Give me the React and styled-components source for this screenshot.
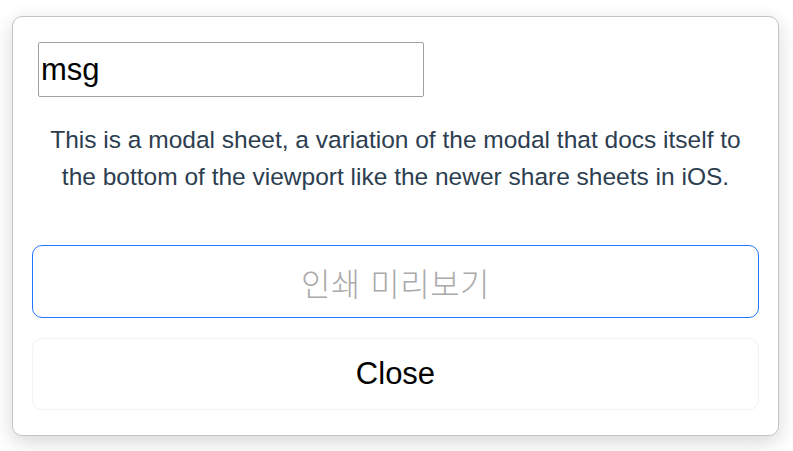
import React from "react";
import styled, { createGlobalStyle } from "styled-components";

const GlobalStyle = createGlobalStyle`
  html, body {
    margin: 0;
    padding: 0;
    background: #ffffff;
    font-family: "Liberation Sans", Arial, sans-serif;
  }
`;

function App() {
  return (
    <Page>
      <GlobalStyle />
      <Sheet>
        <MsgInput defaultValue="msg" />
        <Description>
          This is a modal sheet, a variation of the modal that docs itself to
          the bottom of the viewport like the newer share sheets in iOS.
        </Description>
        <Actions>
          <SheetButton primary>인쇄 미리보기</SheetButton>
          <SheetButton>Close</SheetButton>
        </Actions>
      </Sheet>
    </Page>
  );
}

export default App;

const Page = styled.div`
  padding: 16px 14px 16px 12px;
`;

const Sheet = styled.div`
  display: flex;
  flex-direction: column;
  background: #fff;
  border: 1px solid #c4c4c4;
  border-radius: 10px;
  box-shadow: 0 6px 20px rgba(0, 0, 0, 0.16);
  padding: 25px 19px 25px 19px;
`;

const MsgInput = styled.input`
  align-self: flex-start;
  box-sizing: border-box;
  width: 386px;
  height: 55px;
  margin-left: 6px;
  padding: 0 2px;
  border: 1px solid #a0a0a0;
  border-radius: 2px;
  font-family: "Liberation Sans", Arial, sans-serif;
  font-size: 31px;
  color: #000;
  outline: none;
`;

const Description = styled.p`
  margin: 24px 0 50px;
  padding: 0 12px;
  text-align: center;
  font-size: 24.5px;
  line-height: 37px;
  color: #2c3e50;
`;

const Actions = styled.div`
  display: flex;
  flex-direction: column;
  gap: 20px;
`;

const SheetButton = styled.button`
  box-sizing: border-box;
  height: ${(p) => (p.primary ? "73px" : "72px")};
  background: #fff;
  border: 1px solid ${(p) => (p.primary ? "#2176ff" : "#f2f2f2")};
  border-radius: 10px;
  font-family: "Liberation Sans", Arial, "Noto Sans CJK KR", sans-serif;
  font-size: ${(p) => (p.primary ? "32px" : "31px")};
  font-weight: ${(p) => (p.primary ? 300 : 400)};
  letter-spacing: ${(p) => (p.primary ? "0.5px" : "0")};
  color: ${(p) => (p.primary ? "#aaaaaa" : "#000")};
  cursor: pointer;
`;
